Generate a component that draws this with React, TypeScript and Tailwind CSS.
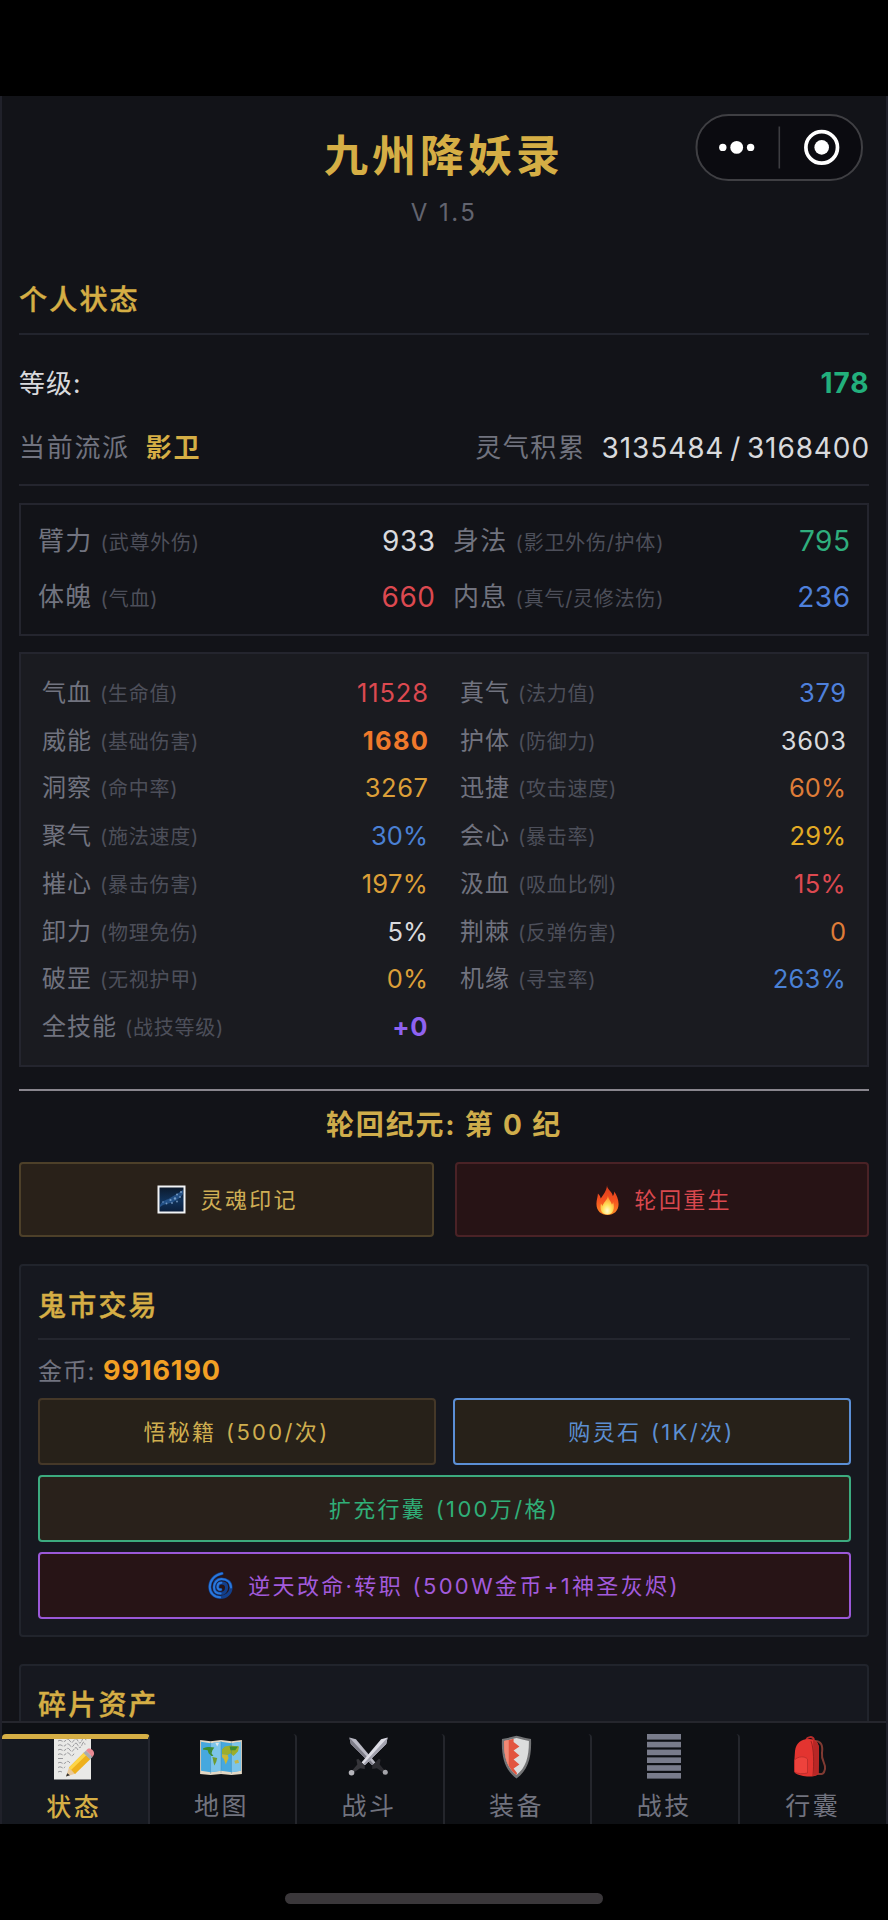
import React from 'react';

type Stat = { name: string; hint: string; value: string; tone: string };

const attributes: Stat[] = [
  { name: '臂力', hint: '武尊外伤', value: '933', tone: 'text-[#d9dadd]' },
  { name: '身法', hint: '影卫外伤/护体', value: '795', tone: 'text-[#2fae7d]' },
  { name: '体魄', hint: '气血', value: '660', tone: 'text-[#dc4950]' },
  { name: '内息', hint: '真气/灵修法伤', value: '236', tone: 'text-[#4e80dc]' },
];

const stats: Stat[] = [
  { name: '气血', hint: '生命值', value: '11528', tone: 'text-[#dc4950] tracking-[0.9px] -mr-[1px]' },
  { name: '真气', hint: '法力值', value: '379', tone: 'text-[#4e80dc] tracking-[0.6px] -mr-[0.6px]' },
  { name: '威能', hint: '基础伤害', value: '1680', tone: 'text-[#f0792b] font-bold tracking-[1.3px] -mr-[1.3px]' },
  { name: '护体', hint: '防御力', value: '3603', tone: 'text-[#d9dadd] tracking-[0.6px] -mr-[0.6px]' },
  { name: '洞察', hint: '命中率', value: '3267', tone: 'text-[#dc9f38] tracking-[0.6px] -mr-[0.6px]' },
  { name: '迅捷', hint: '攻击速度', value: '60%', tone: 'text-[#de7c38]' },
  { name: '聚气', hint: '施法速度', value: '30%', tone: 'text-[#4a80d4]' },
  { name: '会心', hint: '暴击率', value: '29%', tone: 'text-[#e3ab25]' },
  { name: '摧心', hint: '暴击伤害', value: '197%', tone: 'text-[#dc9f38] tracking-[0.3px]' },
  { name: '汲血', hint: '吸血比例', value: '15%', tone: 'text-[#dc4950] tracking-[0.4px]' },
  { name: '卸力', hint: '物理免伤', value: '5%', tone: 'text-[#d9dadd]' },
  { name: '荆棘', hint: '反弹伤害', value: '0', tone: 'text-[#de7c38]' },
  { name: '破罡', hint: '无视护甲', value: '0%', tone: 'text-[#dc9f38]' },
  { name: '机缘', hint: '寻宝率', value: '263%', tone: 'text-[#4a80d4] tracking-[0.3px]' },
  { name: '全技能', hint: '战技等级', value: '+0', tone: 'text-[#8f62f0] font-bold tracking-[0.6px]' },
];

function Capsule() {
  return (
    <svg className="absolute right-[23px] top-[18px] h-[67px] w-[168px]" viewBox="0 0 168 67">
      <rect x="1.500" y="1" width="165.500" height="65" rx="32" fill="#0b0b10" stroke="#3f3f43" strokeWidth="2" />
      <rect x="83.500" y="12.500" width="1.600" height="42" fill="#3d3d41" />
      <g fill="#fff">
        <circle cx="27.800" cy="33.400" r="3.700" />
        <circle cx="41.700" cy="33.400" r="6.400" />
        <circle cx="55.600" cy="33.400" r="3.700" />
        <circle cx="126.700" cy="33.400" r="7.300" />
      </g>
      <circle cx="126.700" cy="33.400" r="15.800" fill="none" stroke="#fff" strokeWidth="3.700" />
    </svg>
  );
}

function GalaxyIcon() {
  return (
    <svg className="size-[29px]" viewBox="0 0 29 29">
      <defs>
        <linearGradient id="sky" x1="0" y1="0" x2="0" y2="1">
          <stop offset="0" stopColor="#0c1a2c" />
          <stop offset=".55" stopColor="#10325a" />
          <stop offset="1" stopColor="#0b1f3c" />
        </linearGradient>
      </defs>
      <rect x=".5" y=".5" width="28" height="28" fill="#f2f4f6" />
      <rect x="2.500" y="2.500" width="24" height="24" fill="url(#sky)" />
      <path d="M3 20c3-5 7-5 10-7s7-4 13-8v4c-3 4-6 6-10 8s-8 1-13 5z" fill="#2c5f9c" opacity=".7" />
      <g fill="#8fb4dc" opacity=".75">
        <circle cx="6" cy="17" r=".8" />
        <circle cx="9.500" cy="18.500" r=".9" />
        <circle cx="13.500" cy="15" r="1.100" />
        <circle cx="15" cy="18" r=".9" />
        <circle cx="18" cy="13.500" r="1.200" />
        <circle cx="20" cy="16.500" r=".9" />
        <circle cx="20" cy="9.500" r="1" />
        <circle cx="23" cy="12" r=".9" />
        <circle cx="24" cy="7" r="1" />
      </g>
    </svg>
  );
}

function FireIcon() {
  return (
    <svg className="h-[30px] w-[23px]" viewBox="0 0 26 30" preserveAspectRatio="none">
      <defs>
        <linearGradient id="flame" x1="0" y1="0" x2="0" y2="1">
          <stop offset="0" stopColor="#d93a1c" />
          <stop offset=".5" stopColor="#f4511f" />
          <stop offset="1" stopColor="#fb8a24" />
        </linearGradient>
        <radialGradient id="core" cx=".5" cy=".8" r=".75">
          <stop offset="0" stopColor="#fffbd0" />
          <stop offset=".45" stopColor="#ffe15a" />
          <stop offset="1" stopColor="#ff8c2a" />
        </radialGradient>
      </defs>
      <path d="M12.500 0c-.5 4 5.500 6 6.500 11 1-1 1.600-2.500 1.500-4.500 3 3.500 5 8 5 12.500 0 7-5.500 11-12.500 11S.5 26 .5 19c0-4.500 1.500-7 1.700-10.500C4 10 5 11.500 5.300 13.500 8 10 12 6 12.500 0z" fill="url(#flame)" />
      <path d="M13.500 11c.5 3.500 3.500 5 4.500 8.500.8-.6 1.200-1.500 1.300-2.500 2.500 6 .2 12.500-6.300 12.500S4 25 5.500 18.500c.8.700 1.500 1.500 2 2.500 1-4 5-5.500 6-10z" fill="url(#core)" />
    </svg>
  );
}

function CycloneIcon() {
  return (
    <svg className="h-[27px] w-[25px]" viewBox="0 0 25 27" fill="none" strokeLinecap="round">
      <path d="M14 1.500C6 3 1.800 9 1.800 15c0 6 4.400 10.300 10.400 10.300S23 21 23 15.500 19 7 13.500 7 6 11 6 15.300s3 6.200 6.600 6.200 6-2.600 6-6-2.300-4.700-5.200-4.700-3.800 2-3.800 4.200 1.500 2.800 3.200 2.600" stroke="#123f8c" strokeWidth="3.200" />
      <path d="M14 1.500C6 3 1.800 9 1.800 15c0 6 4.400 10.300 10.400 10.300M13.500 7C9 7 6 11 6 15.300s3 6.200 6.600 6.200M23 15.500C23 10.500 19 7 13.500 7M13.400 10.800c-2.800 0-3.800 2-3.800 4.200s1.500 2.800 3.200 2.600" stroke="#2a78dc" strokeWidth="2" />
    </svg>
  );
}

function NoteIcon() {
  return (
    <svg className="h-[46px] w-[42px]" viewBox="0 0 42 46">
      <rect x="1" y="1" width="37" height="44.500" fill="#e9e9e7" />
      <g fill="none" stroke="#909094" strokeWidth=".9" strokeDasharray="5 1.200 3 1">
        <path d="M5 7q2-1.500 4 0t4-.8 4 .8 4-.8 4 .8 4-.8 4 0" />
        <path d="M5 11.500q2-1.500 4 0t4-.8 4 .8 4-.8 4 .8 4-.8 3 0" />
        <path d="M5 16q2-1.500 4 0t4-.8 4 .8 4-.8 4 .8" />
        <path d="M5 20.500q2-1.500 4 0t4-.8 4 .8 4-.8" />
        <path d="M5 24.500h5M5 29q2-1.500 4 0t4-.8 4 .8M5 33.500q2-1.500 4 0t3-.8M5 38q2-1.500 4 0" />
      </g>
      <path d="M13 42.500l3-9 7 6z" fill="#e9c99b" />
      <path d="M13 42.500l1.200-3.300 2.800 2.100z" fill="#333" />
      <path d="M16 33.500L31 18.500l6.500 6.500-15.500 15z" fill="#eeb01c" />
      <path d="M16 33.500L31 18.500l2.500 2.500-15.500 15z" fill="#fdd548" />
      <path d="M30.500 19l2.500-2.500 6.500 6.500-2.500 2.500z" fill="#a9adb0" />
      <path d="M33 16.500l1.500-1.500c3-2 8 2.500 6.200 6L39.500 23z" fill="#e98a93" />
    </svg>
  );
}

function MapIcon() {
  return (
    <svg className="h-[38px] w-[44px]" viewBox="0 0 46 40">
      <path d="M1 2l11 1.500L23 2l11 1.500L45 2v36L34 39l-11-1-11 1-11-1z" fill="#e4d8c4" />
      <path d="M2 4l10 1.500L23 4l11 1.500L44 4v30.500L34 36l-11-1.500L12 36 2 34.500z" fill="#46a8de" />
      <path d="M12 5.500L23 4v30.500L12 36zM34 5.500L44 4v30.500L34 36z" fill="#7cc4ea" />
      <path d="M4 11c4-2 8-2 12-1l-2 3-1 3 2 3h-2l-3-3-1-3-5-1z" fill="#3f8f2e" />
      <path d="M17 5l4 0-2 4z" fill="#dfe8ea" />
      <path d="M14 20l5 1-1 4-2 4-1-4z" fill="#6f9b30" />
      <path d="M24 12l3-3 6-1 9 1-1 5-3 3-2 2-3-3-3 2-6-1z" fill="#9cae2c" />
      <path d="M24 17l6 1 1 3-3 7-2-6-2-2z" fill="#cbb832" />
      <path d="M32 9l9 0-3 4-5 0z" fill="#3f8f2e" />
      <path d="M37 24l4-1 1 3-4 1z" fill="#c2b64a" />
      <path d="M12 4v34M23 3v34M34 4v34" stroke="#2f6f9a" strokeOpacity=".4" strokeWidth=".8" />
    </svg>
  );
}

function SwordsIcon() {
  return (
    <svg className="h-[41px] w-[41px]" viewBox="0 0 44 43">
      <path d="M1.500 1l7 2 21 25-3.500 3L3 8z" fill="#b9b9c4" />
      <path d="M1.500 1L3 8l23 23 1.500-1.500z" fill="#7d7d88" />
      <path d="M26 32l7-8 2 1-1 5 5 6-2 2-6-4-5 1z" fill="#2c2c31" />
      <path d="M42.500 1l-7 2-21 25 3.500 3L41 8z" fill="#dcdce4" />
      <path d="M42.500 1L41 8 18 31l-1.500-1.500z" fill="#a2a2ae" />
      <path d="M18 32l-7-8-2 1 1 5-5 6 2 2 6-4 5 1z" fill="#35353a" />
      <circle cx="3.800" cy="39" r="3" fill="#b5b5bb" />
      <circle cx="40" cy="38.500" r="2.700" fill="#a4a4aa" />
    </svg>
  );
}

function ShieldIcon() {
  return (
    <svg className="h-[44px] w-[31px]" viewBox="0 0 32 44" preserveAspectRatio="none">
      <path d="M1 4C7 3 11 2 16 .8 21 2 25 3 31 4c.8 18-3 31-15 39.500C4 35 .2 22 1 4z" fill="#737476" />
      <path d="M3.200 6C8 5.200 12 4 16 3c4 1 8 2.200 12.800 3C29 21 26 33 16 40 6 33 3 21 3.200 6z" fill="#dcdddd" />
      <path d="M3.200 6C7 5.300 10 4.600 13 3.800V7l6 4.500-6 4 6 5-6 4 6 5-6 4 3.500 4.500L16 40C6 33 3 21 3.200 6z" fill="#e2553f" />
      <path d="M3.200 6L8 5v26C4 24 3.100 15 3.200 6z" fill="#f08a76" />
    </svg>
  );
}

function BarsIcon() {
  return (
    <svg className="h-[45px] w-[34px]" viewBox="0 0 34 45" fill="#797c8b">
      <rect y="0" width="34" height="5.600" />
      <rect y="7.800" width="34" height="5.600" />
      <rect y="15.600" width="34" height="5.600" />
      <rect y="23.400" width="34" height="5.600" />
      <rect y="31.200" width="34" height="5.600" />
      <rect y="39" width="34" height="5.600" />
    </svg>
  );
}

function BackpackIcon() {
  return (
    <svg className="mr-[6px] h-[43px] w-[34px]" viewBox="0 0 34 43">
      <path d="M13 6c1-5 7-5 8-1" fill="none" stroke="#b92b2a" strokeWidth="2" />
      <path d="M22 6c6 0 8 4 7 12s4 10 3 16-4 5-7 5" fill="none" stroke="#7f3a32" strokeWidth="2" />
      <path d="M2 16C3 8 8 4 16 4c7 0 10 4 10 10l-.5 25c-4 4-18 3-23.500-1C.5 33 1.500 24 2 16z" fill="#e33430" />
      <path d="M20 5c4.500 1.500 6 5 6 9l-.5 25-4.500 2z" fill="#b82726" />
      <path d="M1.500 25c4-4 10-4 13-1v14c-4 1-10 1-13-1z" fill="#ee423c" stroke="#b82b29" strokeWidth=".8" />
      <path d="M18 6c3 8 3 22 2 35" fill="none" stroke="#8d1d1c" strokeWidth=".8" />
    </svg>
  );
}

const tabs = [
  { label: '状态', icon: <NoteIcon />, active: true },
  { label: '地图', icon: <MapIcon />, active: false },
  { label: '战斗', icon: <SwordsIcon />, active: false },
  { label: '装备', icon: <ShieldIcon />, active: false },
  { label: '战技', icon: <BarsIcon />, active: false },
  { label: '行囊', icon: <BackpackIcon />, active: false },
];

function Label({ stat, size }: { stat: Stat; size: string }) {
  return (
    <span className="flex items-baseline gap-[8px] whitespace-nowrap text-[#71737f]">
      <span className={size}>{stat.name}</span>
      <span className="text-[20px] tracking-[0.75px] text-[#4d4f5a]">({stat.hint})</span>
    </span>
  );
}

function SectionTitle({ children }: { children: React.ReactNode }) {
  return (
    <h2 className="pt-[1px] text-[28px] leading-[40px] font-medium tracking-[2.2px] text-[#d5ae45] [-webkit-text-stroke:0.4px_#d5ae45]">
      {children}
    </h2>
  );
}

const button =
  'flex items-center justify-center rounded-[4px] border-2 text-[22px] leading-[30px] tracking-[2.35px] [word-spacing:1px]';

export default function App() {
  return (
    <div className="flex h-[1920px] w-[888px] flex-col bg-black pt-[96px] font-['Inter','Noto_Sans_CJK_SC',sans-serif]">
      <div className="flex h-[1728px] flex-col border-x-2 border-[#20212a] bg-[#121318]">
        <main className="flex h-[1625px] flex-col overflow-hidden px-[17px]">
          <header className="relative -mx-[17px] flex h-[169px] shrink-0 flex-col items-center pt-[32px]">
            <h1 className="text-[44px] leading-[56px] font-bold tracking-[4px] text-[#d5ae45]">九州降妖录</h1>
            <p className="mt-[14px] text-[24px] leading-[30px] tracking-[2.5px] text-[#62646f]">V 1.5</p>
            <Capsule />
          </header>

          <div className="flex h-[70px] shrink-0 items-center border-b-2 border-[#22242d]">
            <SectionTitle>个人状态</SectionTitle>
          </div>

          <div className="mt-[28px] flex h-[40px] shrink-0 items-center justify-between">
            <span className="text-[26px] tracking-[1px] text-[#d9dadd]">等级:</span>
            <span className="-mr-[0.5px] text-[28px] font-bold tracking-[0.9px] text-[#22b07c]">178</span>
          </div>
          <div className="flex h-[83px] shrink-0 items-center justify-between border-b-2 border-[#24252e] pt-[8px]">
            <span className="flex items-center gap-[16px] text-[26px] tracking-[1.7px] text-[#71737f]">
              当前流派
              <b className="text-[#d5ae45]">影卫</b>
            </span>
            <span className="-mr-[1px] flex items-center gap-[16px] text-[26px] tracking-[1.6px] text-[#71737f]">
              灵气积累
              <span className="text-[28px] tracking-[0.9px] text-[#d9dadd] [word-spacing:-3px]">3135484 / 3168400</span>
            </span>
          </div>

          <section className="mt-[17px] grid h-[133px] shrink-0 grid-cols-2 content-center gap-x-[18px] border-2 border-[#24252e] px-[17px] pb-[2px]">
            {attributes.map((s) => (
              <div key={s.name} className="flex h-[56px] items-center justify-between">
                <Label stat={s} size="text-[26px] tracking-[1.3px]" />
                <span className={`-mr-[0.5px] text-[28px] tracking-[0.5px] ${s.tone}`}>{s.value}</span>
              </div>
            ))}
          </section>

          <section className="mt-[16px] grid h-[415px] shrink-0 grid-cols-2 content-start gap-x-[32px] border-2 border-[#24252e] bg-[#1a1b20] px-[21px] pt-[15px]">
            {stats.map((s) => (
              <div key={s.name} className="flex h-[47.75px] items-center justify-between">
                <Label stat={s} size="text-[24px] tracking-[1px]" />
                <span className={`text-[25.5px] ${s.tone}`}>{s.value}</span>
              </div>
            ))}
          </section>

          <div className="mt-[22px] h-[2px] shrink-0 bg-[#89868e]" />
          <h3 className="mt-[14px] shrink-0 text-center text-[28px] leading-[40px] font-bold tracking-[1.8px] text-[#cfad4b]">
            轮回纪元: 第 0 纪
          </h3>

          <div className="mt-[17px] grid shrink-0 grid-cols-2 gap-[21px]">
            <button className={`${button} h-[75px] gap-[15px] border-[#4d4029] bg-[#292119] pl-[2px] text-[#cfae55]`}>
              <GalaxyIcon />
              灵魂印记
            </button>
            <button className={`${button} h-[75px] gap-[16px] border-[#4a2226] bg-[#271315] pl-[4px] text-[#d9484e]`}>
              <FireIcon />
              轮回重生
            </button>
          </div>

          <section className="mt-[27px] flex h-[373px] shrink-0 flex-col rounded-[4px] border-2 border-[#21242c] bg-[#16181f] px-[17px]">
            <div className="flex h-[74px] shrink-0 items-center border-b-2 border-[#24262e] pt-[6px]">
              <SectionTitle>鬼市交易</SectionTitle>
            </div>
            <p className="mt-[13px] flex h-[37px] shrink-0 items-center gap-[8px] text-[24px] tracking-[0.7px] text-[#71737f]">
              金币:
              <b className="text-[27px] tracking-[0.9px] text-[#f2a024]">9916190</b>
            </p>
            <div className="-mx-[0.5px] mt-[8px] grid grid-cols-2 gap-x-[17px] gap-y-[10px]">
              <button className={`${button} h-[67px] border-[#453828] bg-[#272119] text-[#cfae4f]`}>悟秘籍 (500/次)</button>
              <button className={`${button} h-[67px] border-[#5b8fd6] bg-[#272119] text-[#5c8fd2]`}>购灵石 (1K/次)</button>
              <button className={`${button} col-span-2 h-[67px] border-[#3cab7f] bg-[#29211b] text-[#30ae78]`}>
                扩充行囊 (100万/格)
              </button>
              <button className={`${button} col-span-2 h-[67px] gap-[15px] border-[#9b58d8] bg-[#271416] text-[#a25bdc]`}>
                <CycloneIcon />
                逆天改命·转职 (500W金币+1神圣灰烬)
              </button>
            </div>
          </section>

          <section className="mt-[27px] h-[120px] shrink-0 rounded-[4px] border-2 border-[#21242c] bg-[#16181f] px-[17px] pt-[18px]">
            <SectionTitle>碎片资产</SectionTitle>
          </section>
        </main>

        <nav className="grid h-[103px] grid-cols-[repeat(6,147.6px)] border-t-2 border-[#25262d] bg-[#0e1014] pt-[11px]">
          {tabs.map((t) => (
            <div
              key={t.label}
              className={`flex flex-col items-center overflow-hidden rounded-t-[4px] border-r-2 pr-[2px] last:border-r-0 ${
                t.active
                  ? 'border-t-[5px] border-t-[#d5ae45] border-r-[#24262e] bg-[#161920] font-medium text-[#d5ae45]'
                  : 'border-r-[#24262c] pt-[5px] text-[#71737f]'
              }`}
            >
              <div className="-mt-[5px] flex h-[48px] items-center justify-center">{t.icon}</div>
              <span className="mt-[9px] text-[25px] leading-[36px] tracking-[2.5px]">{t.label}</span>
            </div>
          ))}
        </nav>
      </div>
      <div className="mx-auto mt-[69px] h-[11px] w-[318px] rounded-full bg-[#3a373a]" />
    </div>
  );
}
